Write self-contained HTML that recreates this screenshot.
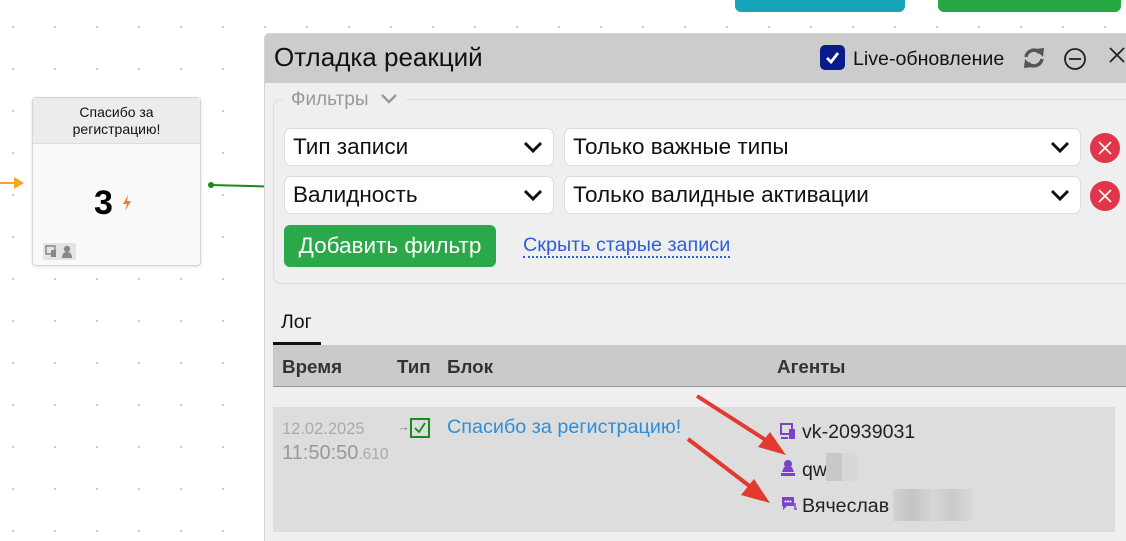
<!DOCTYPE html>
<html style="width:1126px;height:541px;overflow:hidden"><head><meta charset="utf-8"><style>
*{box-sizing:border-box;margin:0;padding:0}
body{width:1126px;height:541px;overflow:hidden;position:relative;background:#fff;font-family:"Liberation Sans",sans-serif;
background-image:radial-gradient(circle,#c8c8c8 1px,transparent 1.3px);background-size:42px 42px;background-position:-8px 6px}
.a{position:absolute;white-space:nowrap}
.sel{position:absolute;background:#fff;border:1px solid #ddd;border-radius:7px;height:38px;font-size:22.5px;line-height:36px;padding-left:8px;color:#111;white-space:nowrap}
.sel svg{position:absolute;right:10px;top:12px}
.rx{position:absolute;width:30px;height:30px;border-radius:50%;background:#e0354a}
.rx svg{position:absolute;left:8px;top:8px}
</style></head><body>
<div class="a" style="left:735px;top:-10px;width:170px;height:22px;background:#17a2b8;border-radius:6px"></div>
<div class="a" style="left:938px;top:-10px;width:183px;height:22px;background:#28a745;border-radius:6px"></div>

<div class="a" style="left:0;top:182px;width:22px;height:2px;background:#f5a623"></div>
<svg class="a" style="left:14px;top:176px" width="12" height="14"><path d="M0 1 L10 7 L0 13 Z" fill="#f5a623"/></svg>
<div class="a" style="left:32px;top:97px;width:169px;height:169px;border:1px solid #d6d6d6;border-radius:4px;background:#f9f9f9;box-shadow:0 1px 3px rgba(0,0,0,.12)">
<div style="height:46px;background:#ececec;border-bottom:1px solid #ddd;text-align:center;font-size:14px;line-height:17px;padding-top:6px;color:#111">Спасибо за<br>регистрацию!</div>
<div class="a" style="left:61px;top:86px;font-size:34px;font-weight:bold;color:#000">3</div>
<svg class="a" style="left:89px;top:97px" width="10" height="16"><path d="M6 0 L1 9 L5 9 L3 16 L9 6 L5 6 Z" fill="#f07a3a"/></svg>
<div class="a" style="left:10px;top:145px;width:33px;height:17px;background:#e4e4e4;border-radius:2px"></div>
<svg class="a" style="left:12px;top:147px" width="12" height="13"><rect x="1" y="1" width="9" height="8" fill="none" stroke="#888" stroke-width="1.5"/><rect x="6" y="5" width="5" height="7" fill="#888"/></svg>
<svg class="a" style="left:28px;top:147px" width="12" height="13"><circle cx="6" cy="4" r="3.2" fill="#888"/><path d="M1 13 Q1 7 6 7 Q11 7 11 13Z" fill="#888"/></svg>
</div>
<div class="a" style="left:211px;top:184px;width:55px;height:2px;background:#178a17;transform:rotate(1.5deg);transform-origin:left"></div>
<div class="a" style="left:208px;top:182px;width:6px;height:6px;border-radius:50%;background:#178a17"></div>

<div class="a" style="left:264px;top:33px;width:862px;height:508px;background:#efefef;border:1px solid #d4d4d4;border-right:none;border-bottom:none;border-radius:5px 0 0 0;overflow:hidden">
<div style="height:49px;background:#cccccc"></div>
</div>
<div class="a" style="left:274px;top:42px;font-size:26px;color:#111">Отладка реакций</div>
<div class="a" style="left:820px;top:45px;width:25px;height:25px;background:#0a1a8a;border-radius:5px"></div>
<svg class="a" style="left:825px;top:51px" width="15" height="13"><path d="M2 7 L6 11 L13 2" fill="none" stroke="#fff" stroke-width="2.8"/></svg>
<div class="a" style="left:853px;top:48px;font-size:19.6px;color:#111">Live-обновление</div>
<svg class="a" style="left:1022px;top:47px" width="24" height="22" viewBox="0 0 24 22"><path d="M4 10 A8 8 0 0 1 18 6" fill="none" stroke="#555" stroke-width="3.5"/><path d="M20 12 A8 8 0 0 1 6 16" fill="none" stroke="#555" stroke-width="3.5"/><path d="M13 2 L22 1 L21 10Z" fill="#555"/><path d="M11 20 L2 21 L3 12Z" fill="#555"/></svg>
<svg class="a" style="left:1063px;top:47px" width="24" height="24"><circle cx="12" cy="12" r="10" fill="none" stroke="#222" stroke-width="1.8"/><path d="M6 12 H18" stroke="#222" stroke-width="1.8"/></svg>
<svg class="a" style="left:1108px;top:46px" width="18" height="18"><path d="M2 2 L16 16 M16 2 L2 16" stroke="#222" stroke-width="1.8"/></svg>

<div class="a" style="left:273px;top:99px;width:870px;height:185px;border:1px solid #ddd;border-radius:8px"></div>
<div class="a" style="left:283px;top:89px;background:#efefef;padding:0 8px;font-size:19px;color:#999">Фильтры <svg width="18" height="12" style="margin-left:6px"><path d="M2 2 L9 9 L16 2" fill="none" stroke="#999" stroke-width="2.5"/></svg></div>

<div class="sel" style="left:284px;top:128px;width:270px">Тип записи<svg width="20" height="13"><path d="M2 2 L10 10 L18 2" fill="none" stroke="#111" stroke-width="3"/></svg></div>
<div class="sel" style="left:564px;top:128px;width:517px">Только важные типы<svg width="20" height="13"><path d="M2 2 L10 10 L18 2" fill="none" stroke="#111" stroke-width="3"/></svg></div>
<div class="sel" style="left:284px;top:176px;width:270px">Валидность<svg width="20" height="13"><path d="M2 2 L10 10 L18 2" fill="none" stroke="#111" stroke-width="3"/></svg></div>
<div class="sel" style="left:564px;top:176px;width:517px">Только валидные активации<svg width="20" height="13"><path d="M2 2 L10 10 L18 2" fill="none" stroke="#111" stroke-width="3"/></svg></div>
<div class="rx" style="left:1090px;top:133px"><svg width="14" height="14"><path d="M1 1 L13 13 M13 1 L1 13" stroke="#fff" stroke-width="1.6"/></svg></div>
<div class="rx" style="left:1090px;top:181px"><svg width="14" height="14"><path d="M1 1 L13 13 M13 1 L1 13" stroke="#fff" stroke-width="1.6"/></svg></div>
<div class="a" style="left:284px;top:225px;width:212px;height:42px;background:#2ba84a;border-radius:6px;color:#fff;font-size:22.5px;line-height:41px;text-align:center">Добавить фильтр</div>
<div class="a" style="left:523px;top:235px;font-size:19.8px;color:#2f5fd8;border-bottom:2px dotted #2f5fd8;line-height:21px">Скрыть старые записи</div>

<div class="a" style="left:281px;top:311px;font-size:19.5px;color:#111">Лог</div>
<div class="a" style="left:273px;top:342px;width:48px;height:3px;background:#111"></div>
<div class="a" style="left:273px;top:345px;width:853px;height:42px;background:#cacaca;border-bottom:1px solid #999"></div>
<div class="a" style="left:282px;top:356px;font-size:18.8px;font-weight:bold;color:#333">Время</div>
<div class="a" style="left:397px;top:356px;font-size:18.8px;font-weight:bold;color:#333">Тип</div>
<div class="a" style="left:447px;top:356px;font-size:18.8px;font-weight:bold;color:#333">Блок</div>
<div class="a" style="left:777px;top:356px;font-size:18.8px;font-weight:bold;color:#333">Агенты</div>

<div class="a" style="left:273px;top:407px;width:842px;height:125px;background:#dddddd"></div>
<div class="a" style="left:282px;top:420px;font-size:16.5px;color:#aaa">12.02.2025</div>
<div class="a" style="left:282px;top:442px;font-size:20px;color:#999">11:50:50<span style="font-size:15.5px;color:#aaa">.610</span></div>
<div class="a" style="left:397px;top:419px;font-size:13px;color:#888">→</div>
<div class="a" style="left:410px;top:418px;width:20px;height:20px;border:2px solid #1a8a1a"></div>
<svg class="a" style="left:413px;top:421px" width="14" height="14"><path d="M2 7 L6 11 L12 2" fill="none" stroke="#1a8a1a" stroke-width="1.8"/></svg>
<div class="a" style="left:447px;top:416px;font-size:19.8px;color:#2e8fd6">Спасибо за регистрацию!</div>

<svg class="a" style="left:780px;top:423px" width="16" height="17"><rect x="1" y="1" width="11" height="10" fill="none" stroke="#7b45c9" stroke-width="2"/><rect x="9" y="6" width="6" height="10" fill="#7b45c9"/><path d="M1 15 H8" stroke="#7b45c9" stroke-width="2"/></svg>
<div class="a" style="left:802px;top:421px;font-size:19.6px;color:#222">vk-20939031</div>
<svg class="a" style="left:780px;top:459px" width="16" height="17"><circle cx="8" cy="5" r="4" fill="#7b45c9"/><path d="M4 8 L2 13 H14 L12 8Z" fill="#7b45c9"/><rect x="1" y="14" width="14" height="3" fill="#7b45c9"/></svg>
<div class="a" style="left:802px;top:459px;font-size:19.6px;color:#222">qw</div>
<div class="a" style="left:826px;top:453px;width:32px;height:28px;background:linear-gradient(90deg,#c8c8c8 50%,#d8d8d8 50%)"></div>
<svg class="a" style="left:780px;top:495px" width="18" height="18"><path d="M2 2 H14 V11 H7 L3 15 V11 H2Z" fill="#7b45c9"/><circle cx="5.5" cy="6.5" r="1" fill="#fff"/><circle cx="8" cy="6.5" r="1" fill="#fff"/><circle cx="10.5" cy="6.5" r="1" fill="#fff"/><path d="M15 8 V14 H17" stroke="#7b45c9" fill="none" stroke-width="1.5"/></svg>
<div class="a" style="left:802px;top:495px;font-size:19.6px;color:#222">Вячеслав</div>
<div class="a" style="left:893px;top:489px;width:80px;height:32px;background:linear-gradient(90deg,#d2d2d2,#c4c4c4,#d6d6d6,#cacaca,#dadada)"></div>

<svg class="a" style="left:0;top:0" width="1126" height="541">
<path d="M697 396 L772 444" stroke="#e23a2e" stroke-width="4"/>
<path d="M786 455 L758 447 L770 432Z" fill="#e23a2e"/>
<path d="M688 439 L756 491" stroke="#e23a2e" stroke-width="4"/>
<path d="M770 503 L741 495 L754 479Z" fill="#e23a2e"/>
</svg>
</body></html>
